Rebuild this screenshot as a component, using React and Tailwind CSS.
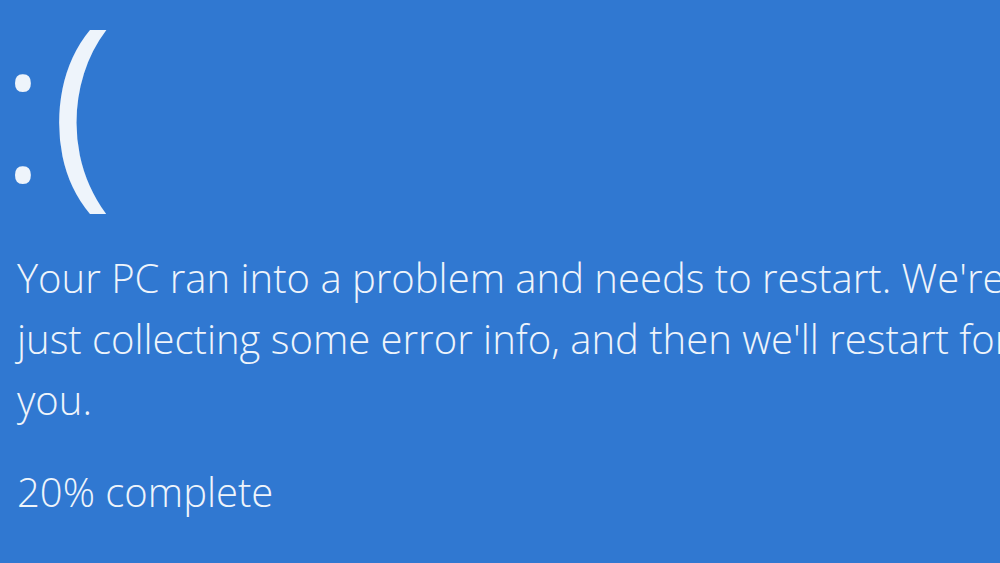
export default function App() {
  return (
    <div
      className="w-[1000px] h-[563px] overflow-hidden bg-[#3078d1] text-[#eef4fb]"
      style={{ fontFamily: '"Open Sans", "Noto Sans", sans-serif' }}
    >
      {/* sad face */}
      <div className="flex items-start h-[208px] whitespace-nowrap">
        <span className="mt-[5px] ml-[-1px] text-[200px] font-[350] leading-none">:</span>
        <span className="mt-[-5px] ml-[4px] text-[210px] font-normal leading-none">(</span>
      </div>

      <div className="pl-[17px] mt-[39px] text-[40px] font-light leading-[61px] whitespace-nowrap">
        <div>Your PC ran into a problem and needs to restart. We're</div>
        <div>just collecting some error info, and then we'll restart for</div>
        <div>you.</div>
        <div className="mt-[31px]">20% complete</div>
      </div>
    </div>
  );
}
